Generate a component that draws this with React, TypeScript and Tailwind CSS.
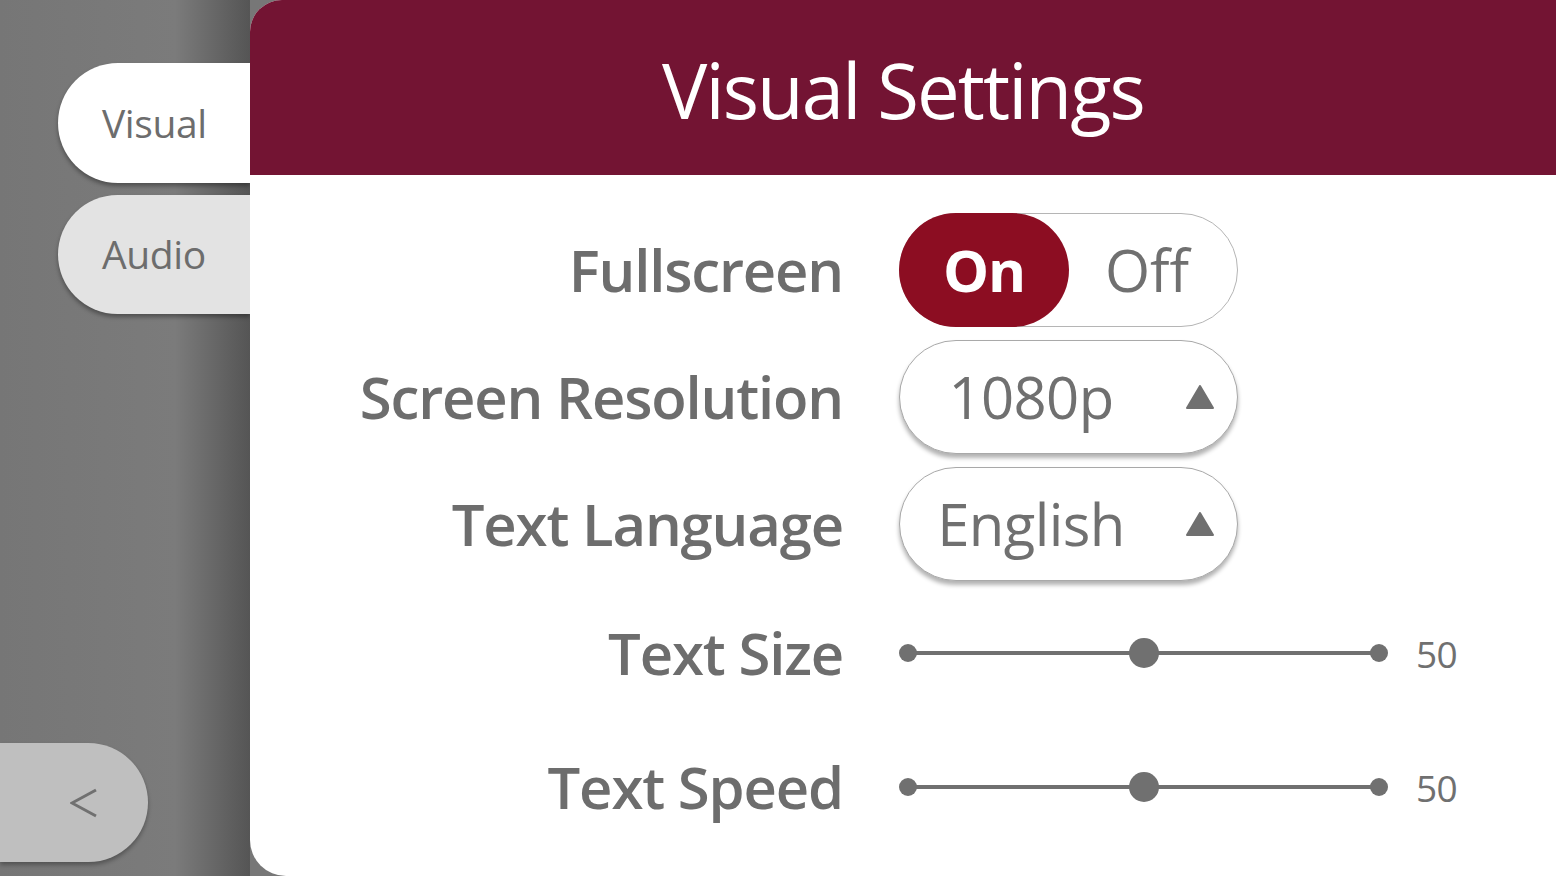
import React from 'react';

const FONT = '"Open Sans", "Noto Sans", sans-serif';

function Slider({ value }: { value: number }) {
  return (
    <div className="flex items-center gap-[28px]">
      <div className="relative h-[30px] w-[489px]">
        <div className="absolute left-[9px] right-[9px] top-[13px] h-[4px] bg-[#707070]" />
        <div className="absolute left-0 top-[6px] h-[18px] w-[18px] rounded-full bg-[#707070]" />
        <div className="absolute right-0 top-[6px] h-[18px] w-[18px] rounded-full bg-[#707070]" />
        <div className="absolute top-0 h-[30px] w-[30px] -translate-x-1/2 rounded-full bg-[#707070]"
             style={{ left: `calc(9px + (100% - 18px) * ${value / 100})` }} />
      </div>
      <span className="text-[37px] leading-none tracking-[-0.02em] text-[#707070]">{value}</span>
    </div>
  );
}

function Dropdown({ label }: { label: string }) {
  return (
    <div className="flex h-[114px] w-[339px] items-center rounded-full border border-[#a9a9a9] bg-white shadow-[0_4px_4px_rgba(0,0,0,0.3)]">
      <span className="w-[262px] text-center text-[58px] leading-none tracking-[-0.01em] text-[#707070]">{label}</span>
      <svg viewBox="0 0 28 24" className="ml-[24px] h-[24px] w-[28px]" fill="#707070">
        <path d="M14 1 L27 23 L1 23 Z" strokeLinejoin="round" stroke="#707070" strokeWidth={2} />
      </svg>
    </div>
  );
}

export default function App() {
  return (
    <div className="flex h-[876px] w-[1556px] overflow-hidden bg-[#777]" style={{ fontFamily: FONT }}>
      {/* sidebar */}
      <div className="flex w-[250px] flex-col bg-[linear-gradient(90deg,#767676_0%,#7b7b7b_70%,#555_100%)]">
        <div className="flex flex-col gap-[12px] pl-[58px] pt-[63px]">
          <div className="flex h-[120px] items-center rounded-l-full bg-white pl-[44px] text-[39px] tracking-[-0.01em] text-[#6d6d6d] shadow-[0_3px_4px_rgba(0,0,0,0.35)]">
            Visual
          </div>
          <div className="flex h-[119px] items-center rounded-l-full bg-[#e3e3e3] pl-[44px] text-[39px] tracking-[-0.01em] text-[#6d6d6d] shadow-[0_3px_4px_rgba(0,0,0,0.35)]">
            Audio
          </div>
        </div>
        <div className="mb-[14px] mt-auto flex h-[119px] w-[148px] items-center justify-end rounded-r-full bg-[#bfbfbf] pr-[50px] shadow-[0_3px_4px_rgba(0,0,0,0.3)]">
          <svg viewBox="0 0 28 30" className="h-[30px] w-[28px]" fill="none" stroke="#707070" strokeWidth={3}>
            <path d="M26 2 L2 15 L26 28" />
          </svg>
        </div>
      </div>

      {/* panel */}
      <div className="flex flex-1 flex-col overflow-hidden rounded-bl-[36px] rounded-tl-[32px] bg-white">
        <div className="flex h-[175px] items-center justify-center bg-[#731433] pt-[4px] text-[76px] tracking-[-0.025em] text-white">
          Visual Settings
        </div>
        <div className="grid grid-cols-[593px_1fr] gap-x-[56px] pt-[38px] text-[#6d6d6d]">
          <div className="flex h-[114px] items-center justify-end text-[58px] font-semibold leading-none tracking-[-0.02em]">Fullscreen</div>
          <div className="flex h-[114px] w-[339px] items-center rounded-full border border-[#b5b5b5] bg-white">
            <div className="-my-px -ml-px flex h-[114px] w-[170px] items-center justify-center rounded-full bg-[#8c0d22] text-[58px] font-bold leading-none tracking-[-0.02em] text-white">
              On
            </div>
            <span className="flex-1 pr-[12px] text-center text-[58px] leading-none text-[#707070]">Off</span>
          </div>

          <div className="mt-[13px] flex h-[114px] items-center justify-end text-[58px] font-semibold leading-none tracking-[-0.02em]">Screen Resolution</div>
          <div className="mt-[13px]"><Dropdown label="1080p" /></div>

          <div className="mt-[13px] flex h-[114px] items-center justify-end text-[58px] font-semibold leading-none tracking-[-0.02em]">Text Language</div>
          <div className="mt-[13px]"><Dropdown label="English" /></div>

          <div className="mt-[13px] flex h-[118px] items-center justify-end text-[58px] font-semibold leading-none tracking-[-0.02em]">Text Size</div>
          <div className="mt-[13px] flex h-[118px] items-center"><Slider value={50} /></div>

          <div className="mt-[16px] flex h-[118px] items-center justify-end text-[58px] font-semibold leading-none tracking-[-0.02em]">Text Speed</div>
          <div className="mt-[16px] flex h-[118px] items-center"><Slider value={50} /></div>
        </div>
      </div>
    </div>
  );
}
